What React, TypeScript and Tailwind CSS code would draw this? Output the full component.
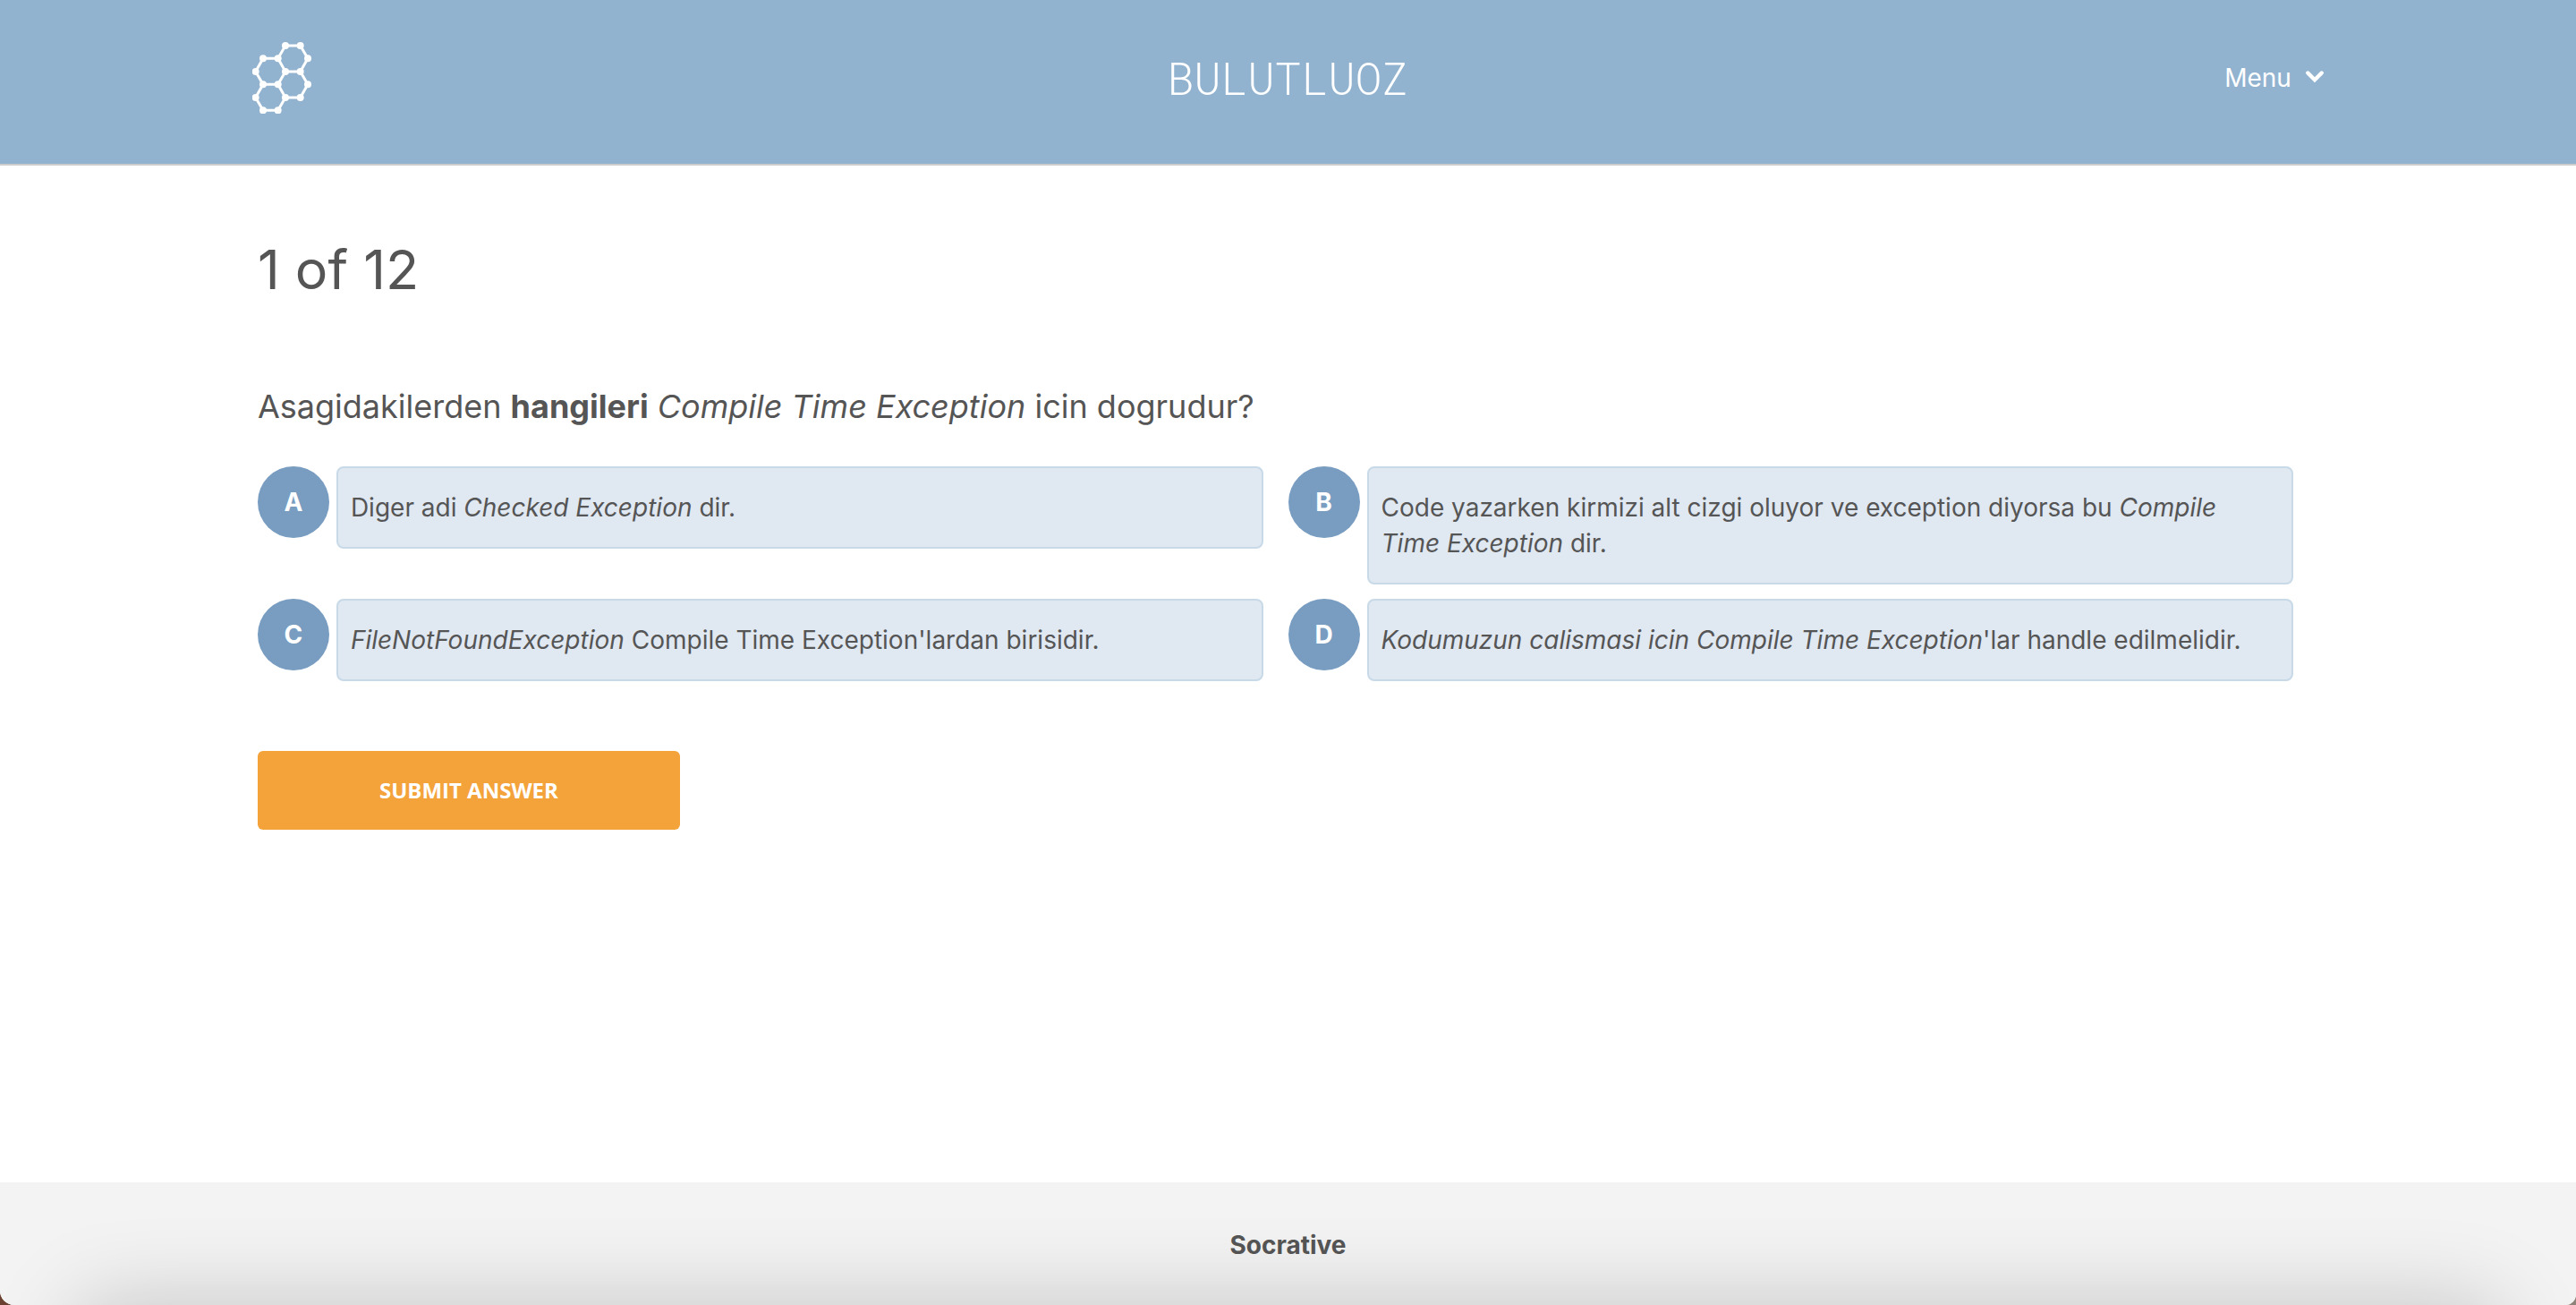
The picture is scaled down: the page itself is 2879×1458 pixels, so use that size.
import type { ReactNode } from "react";

const nodes: [number, number][] = [
  [177, 92], [227, 92], [252, 135], [227, 179], [177, 179], [152, 135],
  [102, 135], [77, 179], [102, 222], [152, 222], [252, 222], [227, 266],
  [177, 266], [77, 266], [102, 309], [152, 309],
];

function Logo() {
  return (
    <svg viewBox="66 80 198 240" className="h-20 w-[66px]" aria-hidden="true">
      <path
        d="M177 92H227L252 135L227 179H177L152 135ZM152 135H102L77 179L102 222H152L177 179M227 179L252 222L227 266H177L152 222M102 222L77 266L102 309H152L177 266"
        fill="none"
        stroke="white"
        strokeWidth="9"
      />
      {nodes.map(([x, y]) => (
        <circle key={`${x}-${y}`} cx={x} cy={y} r="12" fill="white" />
      ))}
    </svg>
  );
}

const answers: { letter: string; text: ReactNode }[] = [
  { letter: "A", text: <>Diger adi <em>Checked Exception</em> dir.</> },
  {
    letter: "B",
    text: <>Code yazarken kirmizi alt cizgi oluyor ve exception diyorsa bu <em>Compile Time Exception</em> dir.</>,
  },
  { letter: "C", text: <><em>FileNotFoundException</em> Compile Time Exception'lardan birisidir.</> },
  { letter: "D", text: <><em>Kodumuzun calismasi icin Compile Time Exception</em>'lar handle edilmelidir.</> },
];

function Answer({ letter, text }: { letter: string; text: ReactNode }) {
  return (
    <button type="button" className="flex items-start gap-2 pr-7 text-left">
      <span className="flex size-20 shrink-0 items-center justify-center rounded-full bg-[#789dc1] font-bold text-white">
        {letter}
      </span>
      <span className="flex-1 rounded-lg border-2 border-[#c8d9e8] bg-[#e0e8f2] px-3.5 py-6 leading-10">
        {text}
      </span>
    </button>
  );
}

export default function App() {
  return (
    <div className="bg-linear-to-r from-[#6b4232] to-[#8f8379]">
      <div className="flex min-h-screen flex-col overflow-hidden rounded-br-xl rounded-bl-2xl bg-white font-['Inter',sans-serif] text-[28px] text-[#555555]">
        <header className="grid grid-cols-3 items-start border-b-2 border-[#cccccc] bg-[#92b3cf] px-[9.8%] pt-[47px] pb-14 text-white">
          <Logo />
          <div className="flex h-20 items-center justify-center font-['Roboto_Mono','Liberation_Mono',monospace] text-[50px] font-light">
            BULUTLUOZ
          </div>
          <button type="button" className="flex h-20 items-center gap-4 justify-self-end">
            Menu
            <svg viewBox="0 0 20 17" className="h-[17px] w-5" aria-hidden="true">
              <path d="M2.3 2.5L10 10.2L17.7 2.5" fill="none" stroke="white" strokeWidth="4.4" strokeLinecap="round" />
            </svg>
          </button>
        </header>

        <main className="flex-1 px-[10%] pt-20">
          <h1 className="text-[61px] leading-[72px]">1 of 12</h1>
          <p className="mt-[95px] text-[36px] leading-[44px]">
            Asagidakilerden <strong>hangileri</strong> <em>Compile Time Exception</em> icin dogrudur?
          </p>
          <div className="mt-[45px] grid grid-cols-2 gap-y-4">
            {answers.map((a) => (
              <Answer key={a.letter} {...a} />
            ))}
          </div>
          <button
            type="button"
            className="mt-[78px] h-[88px] w-[472px] rounded-md bg-[#f4a33b] font-['Open_Sans',sans-serif] text-[24px] font-bold text-white"
          >
            SUBMIT ANSWER
          </button>
        </main>

        <footer className="relative overflow-hidden bg-[#f3f3f3] pt-[50px] pb-[46px] text-center leading-[41px] font-bold">
          Socrative
          <div className="absolute inset-x-22 top-full h-40 shadow-[0_0_100px_rgba(0,0,0,0.2)]" />
        </footer>
      </div>
    </div>
  );
}
